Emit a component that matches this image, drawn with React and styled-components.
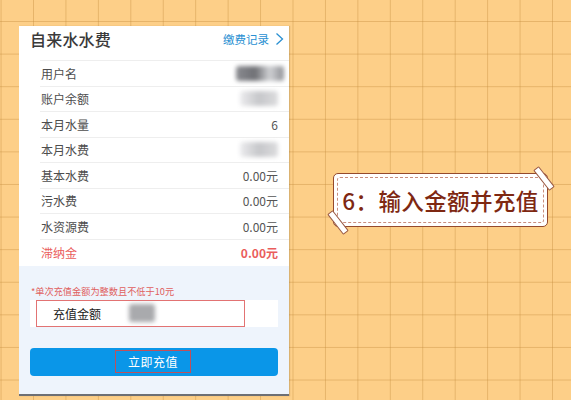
import React from 'react'
import styled, { createGlobalStyle } from 'styled-components'

const Global = createGlobalStyle`
  html, body { margin: 0; padding: 0; }
  body {
    width: 571px;
    height: 400px;
    overflow: hidden;
    font-family: "Noto Sans CJK SC", "Noto Sans", sans-serif;
    background-color: #fdcf88;
    background-image:
      linear-gradient(to right, rgba(196, 140, 60, 0.4) 1px, transparent 1px),
      linear-gradient(to bottom, rgba(196, 140, 60, 0.4) 1px, transparent 1px);
    background-size: 32.45px 32.6px;
    background-position: 33px 21px;
  }
`

const rows = [
  { label: '用户名', blur: 'dark' },
  { label: '账户余额', blur: 'light' },
  { label: '本月水量', value: '6' },
  { label: '本月水费', blur: 'light' },
  { label: '基本水费', value: '0.00元' },
  { label: '污水费', value: '0.00元' },
  { label: '水资源费', value: '0.00元' },
  { label: '滞纳金', value: '0.00元', alert: true },
]

const App = () => {
  return (
    <>
      <Global />
      <Page>
        <Phone>
          <Header>
            <Title>自来水水费</Title>
            <History>
              缴费记录
              <svg width="9" height="14" viewBox="0 0 9 14">
                <polyline points="1.5,1.5 7.5,7 1.5,12.5" fill="none" stroke="#2a90d2" strokeWidth="1.3" />
              </svg>
            </History>
          </Header>
          <Clipped />
          <List>
            {rows.map((r) => (
              <Row key={r.label} $alert={r.alert}>
                <span>{r.label}</span>
                {r.blur ? <Smudge $tone={r.blur} /> : <Value $alert={r.alert}>{r.value}</Value>}
              </Row>
            ))}
          </List>
          <Recharge>
            <Note>*单次充值金额为整数且不低于10元</Note>
            <InputBar>
              <Marked>
                <span>充值金额</span>
                <Smudge $tone="small" />
              </Marked>
            </InputBar>
            <PayButton>
              <ButtonMark>立即充值</ButtonMark>
            </PayButton>
          </Recharge>
        </Phone>

        <Callout>
          <Tape $corner="tr" />
          <Tape $corner="bl" />
          <Dashed>6：输入金额并充值</Dashed>
        </Callout>
      </Page>
    </>
  )
}

const Page = styled.div`
  display: flex;
  align-items: flex-start;
  height: 400px;
`

const Phone = styled.div`
  margin: 26px 0 0 19px;
  width: 270px;
  height: 368px;
  background: #fff;
  border-bottom: 2px solid #6d6f74;
  display: flex;
  flex-direction: column;
  box-shadow: 1px 0 1px rgba(120, 90, 40, 0.25);
`

const Header = styled.div`
  height: 26px;
  display: flex;
  align-items: center;
  justify-content: space-between;
  padding: 0 5px 0 11px;
`

const Title = styled.div`
  font-size: 16px;
  font-weight: 500;
  color: #3a3a3a;
  letter-spacing: 0.2px;
`

const History = styled.div`
  display: flex;
  align-items: center;
  gap: 6px;
  font-size: 11.5px;
  color: #2a90d2;
`

const Clipped = styled.div`
  height: 8px;
  margin-left: 21px;
  border-bottom: 1px solid #eeeeee;
`

const List = styled.div`
  display: flex;
  flex-direction: column;
`

const Row = styled.div`
  height: 25.5px;
  box-sizing: border-box;
  margin-left: 21px;
  padding: 0 11px 0 1px;
  display: flex;
  align-items: center;
  justify-content: space-between;
  font-size: 12px;
  color: ${(p) => (p.$alert ? '#ea5d5c' : '#4d4d4d')};
  border-bottom: ${(p) => (p.$alert ? 'none' : '1px solid #eeeeee')};
`

const Value = styled.span`
  color: ${(p) => (p.$alert ? '#ea5d5c' : '#555')};
  font-weight: ${(p) => (p.$alert ? 700 : 400)};
`

const Smudge = styled.div`
  width: ${(p) => (p.$tone === 'dark' ? 48 : p.$tone === 'small' ? 26 : 38)}px;
  height: ${(p) => (p.$tone === 'small' ? 18 : 15)}px;
  margin-right: ${(p) => (p.$tone === 'dark' ? -6 : 0)}px;
  border-radius: 3px;
  background: ${(p) =>
    p.$tone === 'dark'
      ? 'linear-gradient(90deg, #8a8b90 0%, #6f7075 40%, #d0d1d4 70%, #8f9095 100%)'
      : p.$tone === 'small'
      ? '#a9aaad'
      : 'linear-gradient(90deg, #ececee 0%, #c6c7ca 50%, #dcdcde 100%)'};
  filter: blur(2px);
`

const Recharge = styled.div`
  flex: 1;
  margin-top: 0.5px;
  background: #eef4fc;
  padding: 20px 11px 0 11px;
  display: flex;
  flex-direction: column;
`

const Note = styled.div`
  font-size: 9.2px;
  color: #e0605e;
  line-height: 10px;
  margin-left: 1px;
`

const InputBar = styled.div`
  margin-top: 4px;
  height: 27px;
  background: #fff;
  display: flex;
`

const Marked = styled.div`
  width: 209px;
  margin-left: 6px;
  box-sizing: border-box;
  border: 1px solid #e27373;
  display: flex;
  align-items: center;
  gap: 28px;
  padding-left: 16px;
  font-size: 12px;
  color: #222;
`

const PayButton = styled.div`
  margin-top: 21px;
  height: 28px;
  border-radius: 4px;
  background: #0a96e8;
  display: flex;
  align-items: center;
  justify-content: center;
  padding-right: 2px;
`

const ButtonMark = styled.div`
  width: 76px;
  height: 23px;
  box-sizing: border-box;
  border: 1px solid #c0505a;
  display: flex;
  align-items: center;
  justify-content: center;
  font-size: 12px;
  color: #fff;
  letter-spacing: 0.5px;
`

const Callout = styled.div`
  position: relative;
  margin: 173px 0 0 44px;
  width: 215px;
  height: 54px;
  box-sizing: border-box;
  background: #fff;
  border: 1.5px solid #944a2c;
  border-radius: 5px;
  padding: 3px;
`

const Dashed = styled.div`
  height: 100%;
  box-sizing: border-box;
  border: 1px dashed #c98e7e;
  border-radius: 3px;
  display: flex;
  align-items: center;
  justify-content: center;
  font-size: 22.5px;
  font-weight: 500;
  color: #7e2812;
  letter-spacing: 0.4px;
  white-space: nowrap;
`

const Tape = styled.div`
  position: absolute;
  width: 24px;
  height: 5px;
  background: #fff;
  border: 1px solid #9a5a44;
  border-radius: 1px;
  transform: rotate(52deg);
  ${(p) => (p.$corner === 'tr' ? 'top: 1px; right: -10px;' : 'bottom: 0px; left: -9px;')}
`

export default App
